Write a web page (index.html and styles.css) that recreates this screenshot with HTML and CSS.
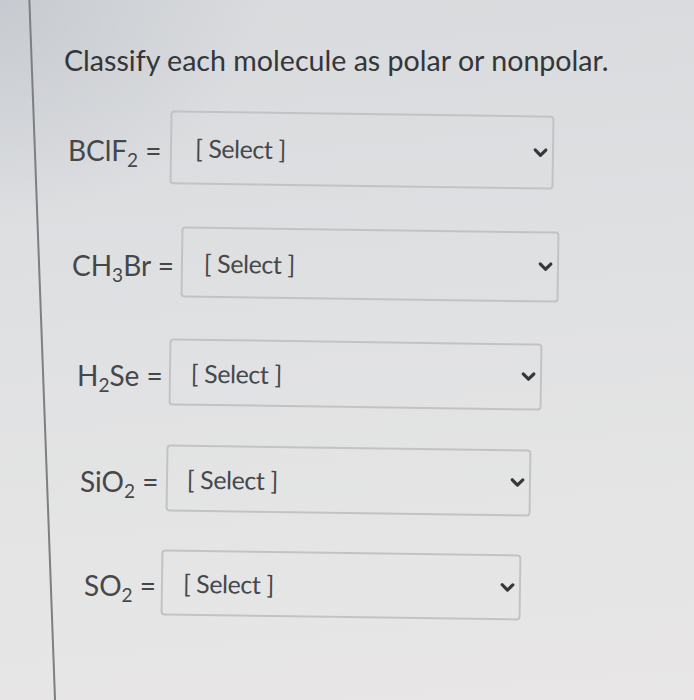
FILE: index.html
```html
<!DOCTYPE html>
<html lang="en">
<head>
<meta charset="utf-8">
<title>Classify each molecule</title>
<link rel="stylesheet" href="styles.css">
</head>
<body>
<main class="panel">
  <h1 class="title">Classify each molecule as polar or nonpolar.</h1>
  <div class="rows">
    <div class="row r1">
      <span class="label">BClF<sub>2</sub> =</span>
      <div class="select"><span class="value">[ Select ]</span><svg class="chev" viewBox="0 0 15 11" width="15" height="11"><path d="M2.2 2.5 L7.5 7.8 L12.8 2.5"/></svg></div>
    </div>
    <div class="row r2">
      <span class="label">CH<sub>3</sub>Br =</span>
      <div class="select"><span class="value">[ Select ]</span><svg class="chev" viewBox="0 0 15 11" width="15" height="11"><path d="M2.2 2.5 L7.5 7.8 L12.8 2.5"/></svg></div>
    </div>
    <div class="row r3">
      <span class="label">H<sub>2</sub>Se =</span>
      <div class="select"><span class="value">[ Select ]</span><svg class="chev" viewBox="0 0 15 11" width="15" height="11"><path d="M2.2 2.5 L7.5 7.8 L12.8 2.5"/></svg></div>
    </div>
    <div class="row r4">
      <span class="label">SiO<sub>2</sub> =</span>
      <div class="select"><span class="value">[ Select ]</span><svg class="chev" viewBox="0 0 15 11" width="15" height="11"><path d="M2.2 2.5 L7.5 7.8 L12.8 2.5"/></svg></div>
    </div>
    <div class="row r5">
      <span class="label">SO<sub>2</sub> =</span>
      <div class="select"><span class="value">[ Select ]</span><svg class="chev" viewBox="0 0 15 11" width="15" height="11"><path d="M2.2 2.5 L7.5 7.8 L12.8 2.5"/></svg></div>
    </div>
  </div>
</main>
</body>
</html>
```

FILE: styles.css
```css
html, body {
  margin: 0;
  padding: 0;
}
body {
  width: 694px;
  height: 700px;
  overflow: hidden;
  font-family: Lato, "Open Sans", sans-serif;
  background:
    radial-gradient(ellipse 260px 220px at 0 0, rgba(196, 200, 206, 0.85), rgba(196, 200, 206, 0) 100%),
    linear-gradient(175deg, #d8dadd 0%, #dfe0e2 40%, #e5e5e5 75%, #e8e6e6 100%);
}
.panel {
  position: relative;
  height: 700px;
  padding-top: 38px;
  box-sizing: border-box;
}
.panel::before {
  content: "";
  position: absolute;
  left: 28px;
  top: -10px;
  width: 1.5px;
  height: 740px;
  background: #7d7f82;
  transform-origin: top left;
  transform: rotate(-2.1deg);
}
.title {
  margin: 0 0 0 64px;
  font-size: 28.6px;
  line-height: 44px;
  font-weight: 400;
  color: #343639;
}
.rows {
  display: flex;
  flex-direction: column;
  margin-top: 31px;
}
.row {
  display: flex;
  align-items: center;
  padding-left: var(--x);
}
.label {
  width: var(--lw);
  flex: none;
  font-size: 28px;
  color: #45474a;
  white-space: nowrap;
}
.label sub {
  font-size: 0.68em;
  vertical-align: -0.33em;
  line-height: 0;
}
.select {
  width: var(--bw);
  height: var(--bh);
  box-sizing: border-box;
  border: 2px solid #c2c3c5;
  border-radius: 4px;
  display: flex;
  align-items: center;
  justify-content: space-between;
  padding: 0 4px 0 var(--tp);
  transform: rotate(0.8deg);
}
.value {
  font-size: 25px;
  letter-spacing: -0.4px;
  color: #46484b;
}
.chev path {
  fill: none;
  stroke: #35373a;
  stroke-width: 3.2;
  stroke-linecap: round;
  stroke-linejoin: round;
}
.r1 { --x: 68px; --lw: 102px; --bw: 384px; --bh: 74px; --tp: 23px; }
.r2 { --x: 72px; --lw: 109px; --bw: 378px; --bh: 71px; --tp: 21px; margin-top: 42px; }
.r3 { --x: 77px; --lw: 92px; --bw: 373px; --bh: 67px; --tp: 20px; margin-top: 41px; }
.r4 { --x: 80px; --lw: 86px; --bw: 365px; --bh: 67px; --tp: 19px; margin-top: 39px; }
.r5 { --x: 84px; --lw: 77px; --bw: 360px; --bh: 66px; --tp: 20px; margin-top: 38px; }
```
